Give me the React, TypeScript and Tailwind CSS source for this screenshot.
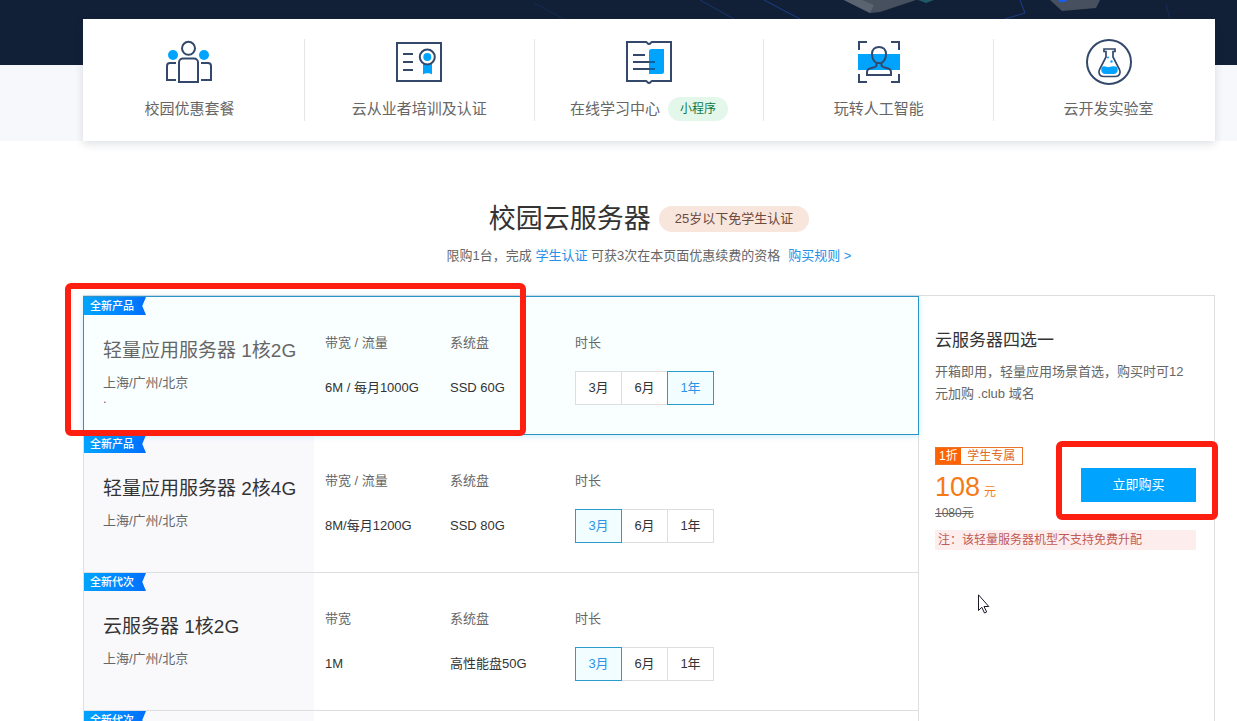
import { useState } from "react";
import type { ReactNode } from "react";
import clsx from "clsx";

interface NavEntry {
  label: string;
  badge?: string;
  icon: ReactNode;
}

interface Plan {
  tag: string;
  name: string;
  regions: string;
  note?: string;
  bandwidthLabel: string;
  bandwidth: string;
  disk: string;
  duration: string;
}

const DURATIONS = ["3月", "6月", "1年"];

const NAV: NavEntry[] = [
  {
    label: "校园优惠套餐",
    icon: (
      <>
        <circle cx="7" cy="16" r="5" fill="#00a4ff" stroke="none" />
        <circle cx="38" cy="16" r="5" fill="#00a4ff" stroke="none" />
        <circle cx="22.5" cy="9.3" r="6.5" />
        <path d="M13 43V23.5a4 4 0 0 1 4-4h11a4 4 0 0 1 4 4V43z" />
        <path d="M10 24H4a3 3 0 0 0-3 3v14h9M35 24h7a3 3 0 0 1 3 3v14H35" />
      </>
    ),
  },
  {
    label: "云从业者培训及认证",
    icon: (
      <>
        <path d="M27 24h9v11.5c-1.500-1.300-3-1.300-4.500-1.300s-3 0-4.500 1.300z" fill="#00a4ff" stroke="none" />
        <rect x="1" y="4" width="44" height="38" />
        <path d="M7 15h10M7 23h10M7 31h10" />
        <circle cx="31.3" cy="18" r="7.5" fill="#fff" />
        <circle cx="31.3" cy="18" r="4" fill="#00a4ff" stroke="none" />
      </>
    ),
  },
  {
    label: "在线学习中心",
    badge: "小程序",
    icon: (
      <>
        <path d="M23 12.5a2.5 2.5 0 0 1 2.5-2.5H38v22.5a2.5 2.5 0 0 1-2.5 2.5H23z" fill="#00a4ff" stroke="none" />
        <path d="M1 3h19c1 0 1.500 2 3 2s2-2 3-2h19v39H26c-1 0-1.500 2-3 2s-2-2-3-2H1z" />
        <path d="M7 16h12M7 23h16M7 30h16" />
        <path d="M23 23h6M23 30h6" stroke="#0d5f9e" />
      </>
    ),
  },
  {
    label: "玩转人工智能",
    icon: (
      <>
        <rect x="2" y="15" width="42" height="16" fill="#00a4ff" stroke="none" />
        <path d="M3 11V3h8M35 3h8v8M43 35v8h-8M11 43H3v-8" />
        <path d="M11 36v-3c0-2.500 2-3.500 4.500-4s5-1 5-2.500v-2.500C17.500 22 16 18.500 16 15c0-4.500 3-7 7-7s7 2.500 7 7c0 3.500-1.500 7-4.500 9v2.500c0 1.500 2.500 2 5 2.500s4.500 1.500 4.500 4v3z" />
        <path d="M20.500 24h5" />
      </>
    ),
  },
  {
    label: "云开发实验室",
    icon: (
      <>
        <circle cx="23" cy="23" r="22" />
        <path d="M18 10h11v2.500h-2V18l6.500 12.500c1.800 4-.5 7-4 7h-12c-3.500 0-5.800-3-4-7L20 18v-5.500h-2z" strokeWidth="1.7" />
        <path d="M16 28c2.500-1.800 5 .8 7.500 0s5-1 7.500 0c2 4-.5 7-3 7h-9c-2.500 0-5-3-3-7z" fill="#00a4ff" stroke="none" />
        <circle cx="22" cy="18.500" r="1" fill="#00a4ff" stroke="none" />
        <circle cx="25.500" cy="22.500" r="1.200" fill="#00a4ff" stroke="none" />
      </>
    ),
  },
];

const PLANS: Plan[] = [
  {
    tag: "全新产品",
    name: "轻量应用服务器 1核2G",
    regions: "上海/广州/北京",
    note: ".",
    bandwidthLabel: "带宽 / 流量",
    bandwidth: "6M / 每月1000G",
    disk: "SSD 60G",
    duration: "1年",
  },
  {
    tag: "全新产品",
    name: "轻量应用服务器 2核4G",
    regions: "上海/广州/北京",
    bandwidthLabel: "带宽 / 流量",
    bandwidth: "8M/每月1200G",
    disk: "SSD 80G",
    duration: "3月",
  },
  {
    tag: "全新代次",
    name: "云服务器 1核2G",
    regions: "上海/广州/北京",
    bandwidthLabel: "带宽",
    bandwidth: "1M",
    disk: "高性能盘50G",
    duration: "3月",
  },
  {
    tag: "全新代次",
    name: "云服务器 2核4G",
    regions: "上海/广州/北京",
    bandwidthLabel: "带宽",
    bandwidth: "1M",
    disk: "高性能盘50G",
    duration: "3月",
  },
];

function HeroArt() {
  return (
    <svg className="absolute top-0 left-0 w-full h-5" aria-hidden="true">
      <g fill="none" stroke="#1c3f86" strokeWidth="1">
        <path d="M534 3l30 16" opacity="0.35" />
        <path d="M700 0l34 19" opacity="0.7" />
        <path d="M764 0l36 19" />
        <path d="M1020 0l5 13-20 6" />
        <path d="M1166 4l4 15" opacity="0.4" />
      </g>
      <path d="M844 0l26 13 10-1 36-12z" fill="#46505f" />
      <path d="M844 0l26 13 4-8-12-5z" fill="#5a6370" />
      <path d="M918 0h16l-8 3z" fill="#1f5a68" />
      <path d="M1050 0l12 11 34-3 4-8z" fill="#46505f" />
      <path d="M1058 0c1 3 8 3 9 0z" fill="#1a5cf0" />
    </svg>
  );
}

function TopNav() {
  return (
    <header className="relative bg-[linear-gradient(#122037_65px,#f7f8fb_65px)] pt-[19px] pl-[83px] pr-[22px]">
      <HeroArt />
      <nav className="relative bg-white py-5 shadow-[0_3px_8px_rgba(30,40,70,0.14)]">
        <ul className="flex -mx-2">
          {NAV.map((item) => (
            <li key={item.label} className="flex-1 border-r border-[#e4e6ea] last:border-r-0">
              <a href="#" className="flex flex-col items-center gap-3 text-[15px] leading-6 text-[#666]">
                <svg
                  width="46"
                  height="46"
                  viewBox="0 0 46 46"
                  fill="none"
                  stroke="#33486a"
                  strokeWidth="2"
                  aria-hidden="true"
                >
                  {item.icon}
                </svg>
                <span className="flex items-center gap-2">
                  {item.label}
                  {item.badge && (
                    <span className="rounded-full bg-[#e3f7eb] px-3 text-xs leading-6 text-[#0e7a45]">
                      {item.badge}
                    </span>
                  )}
                </span>
              </a>
            </li>
          ))}
        </ul>
      </nav>
    </header>
  );
}

function DurationPicker({ initial }: { initial: string }) {
  const [value, setValue] = useState(initial);

  return (
    <div className="mt-[18px] flex">
      {DURATIONS.map((d) => (
        <button
          key={d}
          type="button"
          aria-pressed={d === value}
          onClick={() => setValue(d)}
          className={clsx(
            "-mr-px h-[34px] w-[47px] border",
            d === value
              ? "relative border-[#2a9ccc] bg-[#f1fdff] text-[#2d94e4]"
              : "border-[#dcdee0] bg-white text-[#333]"
          )}
        >
          {d}
        </button>
      ))}
    </div>
  );
}

function Spec({ label, value }: { label: string; value: string }) {
  return (
    <div className="pt-9">
      <p className="text-[#666]">{label}</p>
      <p className="mt-[18px] leading-[34px] text-[#333]">{value}</p>
    </div>
  );
}

function PlanRow({ plan, selected }: { plan: Plan; selected: boolean }) {
  return (
    <li
      className={clsx(
        "relative grid grid-cols-[241px_125px_125px_1fr] text-[13px] leading-5",
        selected
          ? "z-10 min-h-[139px] border border-[#2a93c8] bg-[#f9ffff] shadow-[0_1px_6px_rgba(0,164,255,0.22)]"
          : "min-h-[138px] border-x border-b border-[#dcdee0]"
      )}
    >
      <span className="absolute top-0 left-0 h-[18px] w-[62px] bg-linear-to-r from-[#00a4ff] to-[#006eff] pl-1.5 text-[11px] leading-[18px] font-medium text-white [clip-path:polygon(0_0,100%_0,94%_50%,100%_100%,0_100%)]">
        {plan.tag}
      </span>
      <div className={clsx("mr-[11px] pt-10 pl-[19px]", !selected && "bg-[#f9f9fc]")}>
        <h3 className={clsx("text-[19px] leading-7", selected ? "text-[#666]" : "text-[#333]")}>
          {plan.name}
        </h3>
        <p className="mt-2.5 leading-4 text-[#666]">{plan.regions}</p>
        {plan.note && <p className="leading-4 text-[#666]">{plan.note}</p>}
      </div>
      <Spec label={plan.bandwidthLabel} value={plan.bandwidth} />
      <Spec label="系统盘" value={plan.disk} />
      <div className="pt-9">
        <p className="text-[#666]">时长</p>
        <DurationPicker initial={plan.duration} />
      </div>
      {selected && (
        <span className="pointer-events-none absolute -top-[14px] -left-[19px] h-[153px] w-[461px] rounded-md border-6 border-[#ff1f10]" />
      )}
    </li>
  );
}

function OrderPanel() {
  return (
    <aside className="relative w-[296px] border-r border-[#dcdee0] pt-[33px] pr-[18px] pl-4 text-[13px]">
      <h3 className="text-[17px] leading-6 text-[#333]">云服务器四选一</h3>
      <p className="mt-2 pr-1 leading-[22px] text-[#666]">开箱即用，轻量应用场景首选，购买时可12元加购 .club 域名</p>

      <div className="mt-[42px] flex items-center justify-between">
        <div>
          <p className="flex w-[88px] border border-[#e8752a] text-xs leading-4 text-[#e06a25]">
            <span className="bg-[#ff6200] px-[3px] text-white">1折</span>
            <span className="flex-1 text-center">学生专属</span>
          </p>
          <p className="mt-1.5 text-[27px] leading-8 text-[#f57a15]">
            108<span className="ml-1 text-xs">元</span>
          </p>
          <p className="text-xs leading-5 text-[#666] line-through">1080元</p>
        </div>
        <div className="relative">
          <button type="button" className="h-[34px] w-[115px] bg-[#00a4ff] text-white">
            立即购买
          </button>
          <span className="pointer-events-none absolute -top-[27px] -left-[25px] h-[79px] w-[162px] rounded-md border-6 border-[#ff1f10]" />
        </div>
      </div>
      <p className="mt-[7px] bg-[#fdeeed] px-[3px] text-xs leading-5 text-[#c05a55]">
        注：该轻量服务器机型不支持免费升配
      </p>

      {/* mouse pointer */}
      <svg className="absolute top-[298px] left-[59px]" width="12" height="20" viewBox="0 0 12 20" aria-hidden="true">
        <path
          d="M.5.8v15.700l3.300-3.200 2.700 5.700 2.200-1-2.700-5.500h4.800z"
          fill="#fff"
          stroke="#1a1a2a"
          strokeWidth="1"
        />
      </svg>
    </aside>
  );
}

export default function App() {
  return (
    <div className="min-h-screen overflow-hidden bg-white font-['Liberation_Sans','Noto_Sans_CJK_SC',sans-serif]">
      <TopNav />
      <main className="pt-[58px] pr-[22px] pl-[83px]">
        <div className="flex items-center justify-center gap-2">
          <h2 className="text-[27px] leading-10 text-[#333]">校园云服务器</h2>
          <span className="rounded-full bg-[#f8e5dc] px-4 text-[13px] leading-[26px] text-[#6b4a40]">
            25岁以下免学生认证
          </span>
        </div>
        <p className="mt-[7px] text-center text-[13px] leading-5 text-[#666]">
          限购1台，完成{" "}
          <a href="#" className="text-[#2491e8]">
            学生认证
          </a>{" "}
          可获3次在本页面优惠续费的资格
          <a href="#" className="ml-2 text-[#2491e8]">
            购买规则 &gt;
          </a>
        </p>

        <section className="mt-[29px] flex border-t border-[#dcdee0]">
          <ul className="flex-1">
            {PLANS.map((plan, i) => (
              <PlanRow key={plan.name} plan={plan} selected={i === 0} />
            ))}
          </ul>
          <OrderPanel />
        </section>
      </main>
    </div>
  );
}
